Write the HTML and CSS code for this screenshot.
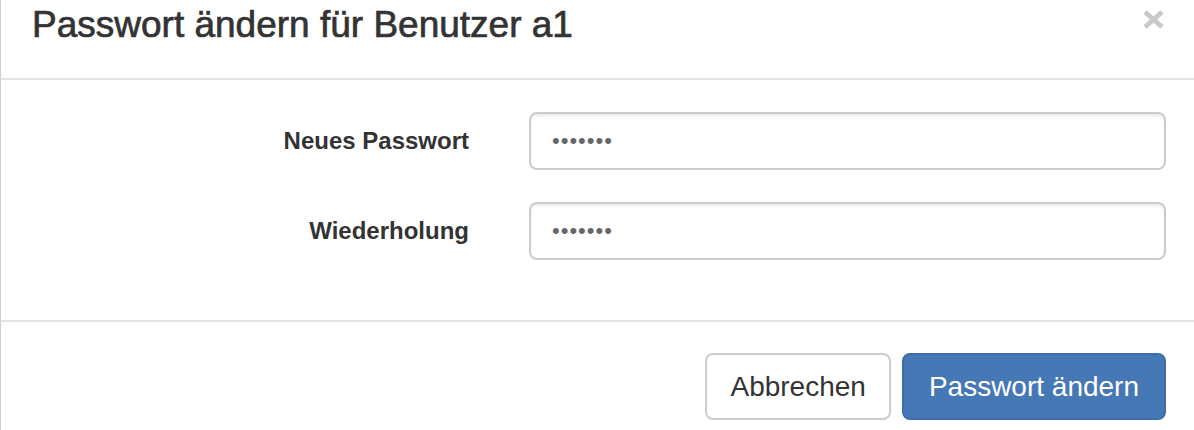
FILE: index.html
```html
<!DOCTYPE html>
<html lang="de">
<head>
<meta charset="utf-8">
<title>Passwort ändern</title>
<link rel="stylesheet" href="styles.css">
</head>
<body>
<div class="modal">
  <div class="modal-header">
    <h4 class="modal-title">Passwort ändern für Benutzer a1</h4>
    <button class="close" type="button" aria-label="Schließen">
      <svg width="23" height="19" viewBox="0 0 23 19"><path d="M3 2 L20 17 M20 2 L3 17" stroke="#c9c9c9" stroke-width="5" stroke-linecap="butt"/></svg>
    </button>
  </div>
  <form class="modal-body">
    <label class="form-label" for="pw1">Neues Passwort</label>
    <input class="form-control" id="pw1" type="password" value="1234567">
    <label class="form-label" for="pw2">Wiederholung</label>
    <input class="form-control" id="pw2" type="password" value="1234567">
  </form>
  <div class="modal-footer">
    <button class="btn btn-default" type="button">Abbrechen</button>
    <button class="btn btn-primary" type="button">Passwort ändern</button>
  </div>
</div>
</body>
</html>
```

FILE: styles.css
```css
* { box-sizing: border-box; }

html, body {
  margin: 0;
  padding: 0;
  background: #ffffff;
}

body {
  font-family: "Liberation Sans", Arial, Helvetica, sans-serif;
  color: #333333;
}

.modal {
  height: 430px;
  background: #ffffff;
  border-left: 1px solid #cfcfcf;
  overflow: hidden;
}

.modal-header {
  height: 80px;
  display: flex;
  justify-content: space-between;
  align-items: flex-start;
  padding: 3px 29px 0 31px;
  border-bottom: 2px solid #e5e5e5;
}

.modal-title {
  margin: 0;
  font-size: 37px;
  line-height: 44px;
  font-weight: 500;
  color: #333333;
  -webkit-text-stroke: 0.7px #333333;
}

.close {
  margin: 7px 0 0 0;
  padding: 0;
  border: 0;
  background: transparent;
  line-height: 0;
  cursor: pointer;
}

.modal-body {
  margin: 0;
  display: grid;
  grid-template-columns: 1fr 637px;
  column-gap: 60px;
  row-gap: 32px;
  align-items: center;
  padding: 32px 28px 60px 0;
}

.form-label {
  text-align: right;
  font-size: 24px;
  font-weight: 700;
  color: #333333;
}

.form-control {
  height: 58px;
  width: 100%;
  padding: 0 21px;
  border: 2px solid #cccccc;
  border-radius: 8px;
  background: #ffffff;
  box-shadow: inset 0 2px 2px rgba(0, 0, 0, 0.075);
  font-family: "Liberation Sans", Arial, sans-serif;
  font-size: 22px;
  letter-spacing: 1px;
  color: #666666;
  outline: none;
}

.modal-footer {
  display: flex;
  justify-content: flex-end;
  gap: 11px;
  padding: 31px 28px 0 0;
  border-top: 2px solid #e5e5e5;
}

.btn {
  height: 67px;
  padding: 0 23px;
  border: 2px solid transparent;
  border-radius: 8px;
  font-family: "Liberation Sans", Arial, sans-serif;
  font-size: 28px;
  line-height: 1;
  cursor: pointer;
}

.btn-default {
  background: #ffffff;
  border-color: #cccccc;
  color: #333333;
}

.btn-primary {
  padding: 0 25px;
  background: #4678b5;
  border-color: #3e6ea8;
  color: #ffffff;
}
```
